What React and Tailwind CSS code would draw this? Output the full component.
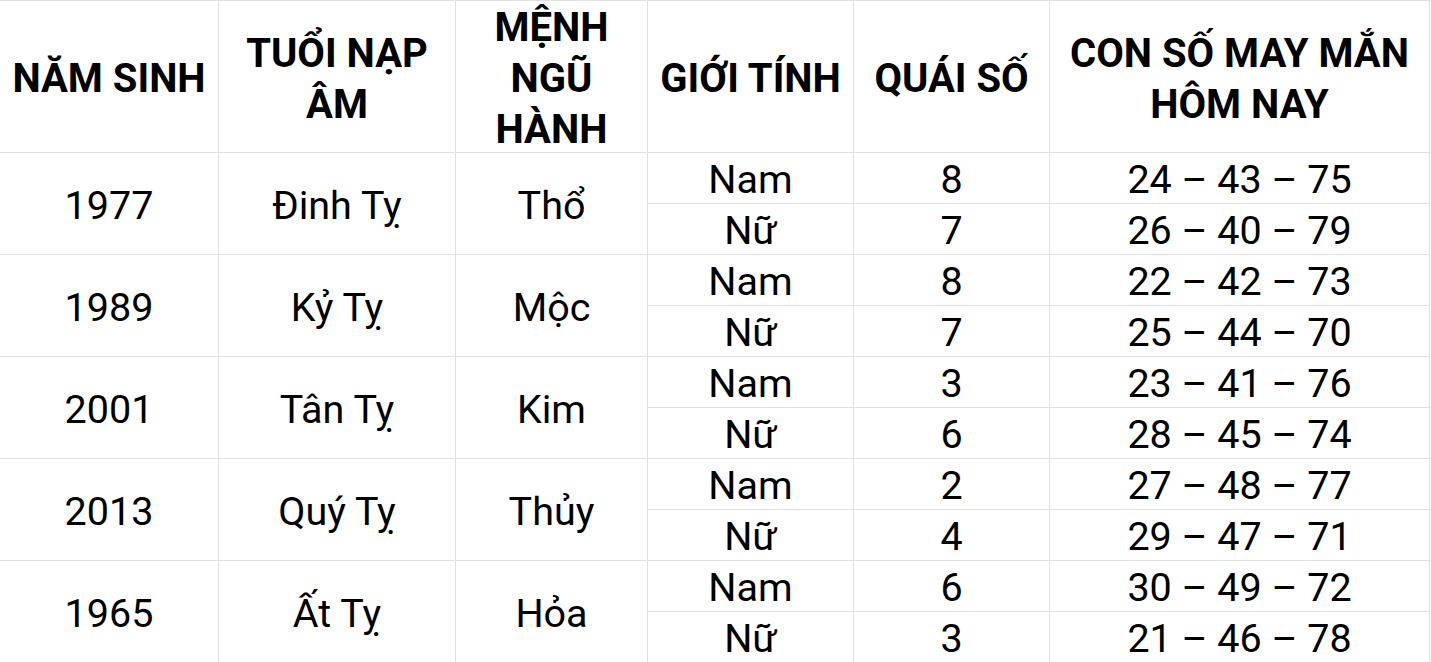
const groups = [
  { year: '1977', tuoi: 'Đinh Tỵ', menh: 'Thổ', rows: [['Nam', '8', '24 – 43 – 75'], ['Nữ', '7', '26 – 40 – 79']] },
  { year: '1989', tuoi: 'Kỷ Tỵ', menh: 'Mộc', rows: [['Nam', '8', '22 – 42 – 73'], ['Nữ', '7', '25 – 44 – 70']] },
  { year: '2001', tuoi: 'Tân Tỵ', menh: 'Kim', rows: [['Nam', '3', '23 – 41 – 76'], ['Nữ', '6', '28 – 45 – 74']] },
  { year: '2013', tuoi: 'Quý Tỵ', menh: 'Thủy', rows: [['Nam', '2', '27 – 48 – 77'], ['Nữ', '4', '29 – 47 – 71']] },
  { year: '1965', tuoi: 'Ất Tỵ', menh: 'Hỏa', rows: [['Nam', '6', '30 – 49 – 72'], ['Nữ', '3', '21 – 46 – 78']] },
]

const headers = [
  ['NĂM SINH'],
  ['TUỔI NẠP', 'ÂM'],
  ['MỆNH', 'NGŨ', 'HÀNH'],
  ['GIỚI TÍNH'],
  ['QUÁI SỐ'],
  ['CON SỐ MAY MẮN', 'HÔM NAY'],
]

const cell = 'flex items-center justify-center text-center pt-[4px] border-r border-b border-[#e2e2e2]'

export default function App() {
  return (
    <div className="w-[1431px] h-[662px] overflow-hidden bg-white text-black font-['Roboto',sans-serif]">
      <div className="grid grid-cols-[219px_237px_192px_206px_196px_380px] grid-rows-[152px_repeat(10,51px)] border-t border-[#e2e2e2] w-[1430px]">
        {headers.map((lines, i) => (
          <div key={i} className={`${cell} font-bold text-[40px] leading-[51px]`}>
            <div>
              {lines.map((l) => (
                <div key={l}>{l}</div>
              ))}
            </div>
          </div>
        ))}
        {groups.map((g) => (
          <Group key={g.year} g={g} />
        ))}
      </div>
    </div>
  )
}

function Group({ g }) {
  return (
    <>
      <div className={`${cell} row-span-2 text-[39.5px]`}>{g.year}</div>
      <div className={`${cell} row-span-2 text-[39.5px]`}>{g.tuoi}</div>
      <div className={`${cell} row-span-2 text-[39.5px]`}>{g.menh}</div>
      {g.rows.map(([sex, q, nums], i) => (
        <Row key={i} first={i === 0} sex={sex} q={q} nums={nums} />
      ))}
    </>
  )
}

function Row({ first, sex, q, nums }) {
  const pos = first ? '' : 'col-start-4'
  return (
    <>
      <div className={`${cell} ${pos} text-[39.5px] leading-none`}>{sex}</div>
      <div className={`${cell} text-[39.5px] leading-none`}>{q}</div>
      <div className={`${cell} text-[39.5px] leading-none`}>{nums}</div>
    </>
  )
}
